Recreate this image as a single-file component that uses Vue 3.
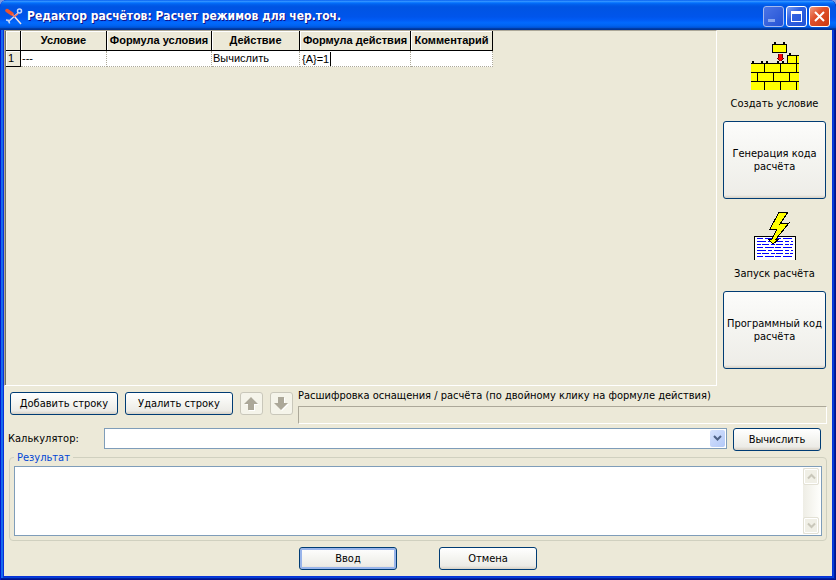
<script setup>
import { ref } from 'vue'

const columns = ['Условие', 'Формула условия', 'Действие', 'Формула действия', 'Комментарий']

const rows = ref([
  { condition: '---', conditionFormula: '', action: 'Вычислить', actionFormula: '{A}=1', comment: '' },
])

const expression = ref('')
const result = ref('')

// [x, y] of the studs and [x, y, height] of the brick joints
const studs = [[23, 0], [32, 0], [38, 11], [1, 19], [10, 19], [15, 19], [26, 19], [31, 19]]
const joints = [[13, 21, 9], [29, 21, 9], [45, 13, 17], [6, 30, 9], [22, 30, 9], [38, 30, 9], [13, 39, 9], [29, 39, 9], [45, 39, 9]]

function addRow() {
  rows.value.push({ condition: '---', conditionFormula: '', action: '', actionFormula: '', comment: '' })
}

function removeRow() {
  rows.value.pop()
}
</script>

<template>
  <div class="window">
    <header class="titlebar">
      <svg class="app-icon" width="18" height="18" viewBox="0 0 18 18" fill="none">
        <path d="M13 6L3 15M1 13l3 .5.500 3" stroke="#c8d8f8" stroke-width="1.500" />
        <circle cx="14.500" cy="4" r="2" stroke="#c8d8f8" stroke-width="1.500" />
        <path d="M9 9l7 8" stroke="#f4e4e4" stroke-width="1.500" />
        <path d="M2 3.500l5 3.500" stroke="#f0532c" stroke-width="3.500" stroke-linecap="round" />
        <path d="M7 7l3 3M10 9l3-2" stroke="#f0735c" stroke-width="1.500" />
      </svg>
      <h1>Редактор расчётов: Расчет режимов для чер.точ.</h1>
      <div class="caption-buttons">
        <button class="caption minimize" aria-label="Свернуть" disabled>
          <svg width="19" height="19" viewBox="0 0 19 19"><path d="M4 12h7v3H4z" fill="#8aa7ee" /></svg>
        </button>
        <button class="caption" aria-label="Развернуть">
          <svg width="19" height="19" viewBox="0 0 19 19"><path d="M4 4h11v11H4zM5 7v7h9V7z" fill="#fff" fill-rule="evenodd" /></svg>
        </button>
        <button class="caption close" aria-label="Закрыть">
          <svg width="19" height="19" viewBox="0 0 19 19"><path d="M5 5l9 9M14 5l-9 9" stroke="#fff" stroke-width="2" /></svg>
        </button>
      </div>
    </header>

    <main class="client">
      <section class="workspace">
        <div class="grid">
          <table>
            <colgroup>
              <col class="c-num" /><col class="c-cond" /><col class="c-condf" />
              <col class="c-act" /><col class="c-actf" /><col class="c-com" />
            </colgroup>
            <thead>
              <tr>
                <th></th>
                <th v-for="column in columns" :key="column">{{ column }}</th>
              </tr>
            </thead>
            <tbody>
              <tr v-for="(row, i) in rows" :key="i">
                <th scope="row">{{ i + 1 }}</th>
                <td>{{ row.condition }}</td>
                <td>{{ row.conditionFormula }}</td>
                <td>{{ row.action }}</td>
                <td><input v-model="row.actionFormula" aria-label="Формула действия" /></td>
                <td>{{ row.comment }}</td>
              </tr>
            </tbody>
          </table>
        </div>

        <aside class="sidebar">
          <button class="picture">
            <svg width="48" height="48" viewBox="0 0 48 48" shape-rendering="crispEdges">
              <path d="M0 21h36v-8h12v35H0zM21 2h15v9H21z" fill="#ff0" />
              <path d="M0 21h48v1H0zM0 30h48v1H0zM0 39h48v1H0zM36 13h12v1H36zM36 13h1v9h-1z" />
              <path d="M21.500 2.500h14v8h-14z" fill="none" stroke="#000" />
              <rect v-for="[x, y] in studs" :key="`s${x}-${y}`" :x="x" :y="y" width="2" height="2" />
              <rect v-for="[x, y, h] in joints" :key="`j${x}-${y}`" :x="x" :y="y" width="1" :height="h" />
              <path d="M28 12h3v4h1v1h-1v1h-1v1h-1v-1h-1v-1h-1v-1h1z" fill="#f00" />
              <path d="M27 12h1v4h-1zM31 12h1v4h-1zM26 16h1v1h-1zM32 16h1v1h-1zM27 17h1v1h-1zM31 17h1v1h-1zM28 18h1v1h-1zM30 18h1v1h-1z" fill="#600" />
            </svg>
            <span>Создать условие</span>
          </button>
          <button class="push tall">Генерация кода расчёта</button>
          <button class="picture">
            <svg width="42" height="48" viewBox="0 0 42 48" shape-rendering="crispEdges">
              <path d="M1 25h40v23H1z" fill="#fff" />
              <path d="M0 48V24h42v24h-1V25H1v23z" />
              <g fill="none" stroke="#00f">
                <path d="M3 26.500h36M3 35.500h36M3 44.500h36" stroke-dasharray="6 2 9 1" />
                <path d="M3 29.500h36M3 38.500h36" stroke-dasharray="9 2 4 2" />
                <path d="M3 32.500h36M3 41.500h36" stroke-dasharray="4 1 7 2" />
              </g>
              <path d="M25 0h9L26 12l9-1L22 27h3l-6 5-5-5h4l5-10h-7z" fill="#ff0" stroke="#000" />
            </svg>
            <span>Запуск расчёта</span>
          </button>
          <button class="push tall">Программный код расчёта</button>
        </aside>
      </section>

      <section class="row-tools">
        <button class="push row-button" @click="addRow">Добавить строку</button>
        <button class="push row-button" @click="removeRow">Удалить строку</button>
        <button class="arrow" aria-label="Вверх" disabled>
          <svg width="15" height="14" viewBox="0 0 15 14">
            <path d="M8 1l7 7h-4v6H5V8H1z" fill="#fff" />
            <path d="M7 0l7 7h-4v6H4V7H0z" fill="#aca899" />
          </svg>
        </button>
        <button class="arrow" aria-label="Вниз" disabled>
          <svg width="15" height="14" viewBox="0 0 15 14">
            <path d="M8 14l7-7h-4V1H5v6H1z" fill="#fff" />
            <path d="M7 13l7-7h-4V0H4v6H0z" fill="#aca899" />
          </svg>
        </button>
        <div class="decode">
          <label for="decode">Расшифровка оснащения / расчёта (по двойному клику на формуле действия)</label>
          <input id="decode" type="text" readonly />
        </div>
      </section>

      <section class="calculator">
        <label for="calc">Калькулятор:</label>
        <div class="combo">
          <select id="calc" v-model="expression">
            <option value=""></option>
          </select>
          <span class="drop">
            <svg width="9" height="7" viewBox="0 0 9 7"><path d="M1 1l3.500 3.500L8 1" fill="none" stroke="#4d6185" stroke-width="2" /></svg>
          </span>
        </div>
        <button class="push calc-button">Вычислить</button>
      </section>

      <fieldset>
        <legend>Результат</legend>
        <div class="memo">
          <textarea v-model="result" aria-label="Результат"></textarea>
          <div class="scrollbar">
            <button aria-label="Прокрутить вверх" disabled>
              <svg width="9" height="7" viewBox="0 0 9 7"><path d="M1 5.500L4.500 2L8 5.500" fill="none" stroke="#c9c7ba" stroke-width="2" /></svg>
            </button>
            <button aria-label="Прокрутить вниз" disabled>
              <svg width="9" height="7" viewBox="0 0 9 7"><path d="M1 1.500L4.500 5L8 1.500" fill="none" stroke="#c9c7ba" stroke-width="2" /></svg>
            </button>
          </div>
        </div>
      </fieldset>

      <footer>
        <button class="push default">Ввод</button>
        <button class="push">Отмена</button>
      </footer>
    </main>
  </div>
</template>

<style>
body {
  margin: 0;
  background: #7b9ae0;
}
</style>

<style scoped>
* {
  box-sizing: border-box;
}

.window {
  display: flex;
  flex-direction: column;
  min-height: 100vh;
  padding: 0 4px 4px;
  border-radius: 7px 7px 0 0;
  background: #0831d9;
  box-shadow: inset 1px 0 #0019cf, inset -1px -1px #00138c, inset -2px -2px #001ea0, inset 3px 0 #166aee, inset -3px -3px #0441d8;
  color: #000;
  font-family: "DejaVu Sans Condensed", "DejaVu Sans", sans-serif;
  font-size: 11px;
  line-height: 13px;
}

button,
input,
select,
textarea {
  margin: 0;
  padding: 0;
  border: 0;
  color: inherit;
  font: inherit;
}

.titlebar {
  display: flex;
  align-items: center;
  height: 30px;
  margin: 0 -4px;
  padding: 2px 6px 0 5px;
  border-radius: 7px 7px 0 0;
  background: linear-gradient(#0058ee 0, #3593ff 4%, #288eff 6%, #127dff 8%, #036ffc 10%, #0262ee 14%, #0057e5 20%, #0054e3 24%, #0055eb 56%, #005bf5 66%, #026afe 76%, #0062ef 86%, #0052d6 92%, #0040ab 94%, #003092 100%);
}

h1 {
  flex: 1;
  margin: 0 0 0 4px;
  color: #fff;
  font-size: 12px;
  line-height: 16px;
  text-shadow: 1px 1px #0f1089;
  white-space: nowrap;
}

.caption-buttons {
  display: flex;
  gap: 2px;
}

.caption {
  width: 21px;
  height: 21px;
  border: 1px solid #fff;
  border-radius: 3px;
  background: linear-gradient(135deg, #7d9ff2, #2f60e0 40%, #2254d6);
}

.caption svg {
  display: block;
}

.caption.minimize {
  border-color: #a3b9ee;
  background: linear-gradient(135deg, #4a74e6, #2452d4);
}

.caption.close {
  background: linear-gradient(135deg, #f09a80, #e0512c 40%, #cc3a10);
}

.client {
  display: flex;
  flex: 1;
  flex-direction: column;
  background: #ece9d8;
}

.workspace {
  display: flex;
  flex: 1;
}

.grid {
  flex: 1;
  border: 1px solid;
  border-color: #aca899 #fff #fff #aca899;
  box-shadow: inset 1px 0 #716f64;
  padding-left: 1px;
}

table {
  border-collapse: separate;
  border-spacing: 0;
  table-layout: fixed;
  width: 487px;
  font-family: "Liberation Sans", Arial, sans-serif;
}

.c-num {
  width: 15px;
}

.c-cond {
  width: 86px;
}

.c-condf {
  width: 105px;
}

.c-act {
  width: 88px;
}

.c-actf {
  width: 111px;
}

.c-com {
  width: 82px;
}

th,
td {
  padding: 0 1px;
  white-space: nowrap;
}

th {
  height: 20px;
  border: solid #000;
  border-width: 0 1px 1px 0;
  box-shadow: inset 1px 1px #fff;
}

tbody th {
  height: 16px;
  padding-left: 2px;
  font-weight: 400;
  text-align: left;
}

td {
  border: dotted #aca899;
  border-width: 0 1px 1px 0;
  background: #fff;
  text-align: left;
}

td input {
  display: block;
  width: 30px;
  height: 14px;
  padding-left: 1px;
  border-right: 1px solid #000;
  outline: 0;
}

.sidebar {
  display: flex;
  flex-direction: column;
  width: 115px;
  padding: 12px 6px 0;
}

.picture {
  display: flex;
  flex-direction: column;
  align-items: center;
  justify-content: space-between;
  height: 68px;
  background: none;
  white-space: nowrap;
}

.push {
  width: 98px;
  height: 23px;
  border: 1px solid #003c74;
  border-radius: 3px;
  background: linear-gradient(#fff, #f4f4f0 50%, #ecebe6 85%, #d6d0c5);
}

.push.tall {
  width: 103px;
  height: 78px;
  margin: 11px 0 13px;
  background: linear-gradient(#fcfcfb, #f4f4f0 50%, #eeede8 96%, #d6d0c5);
}

.push.default {
  box-shadow: inset 0 0 0 2px #98b4ea;
}

.row-tools {
  display: flex;
  align-items: flex-start;
  padding: 6px 5px 0 6px;
}

.push.row-button {
  width: 108px;
  margin-right: 7px;
}

.arrow {
  display: flex;
  align-items: center;
  justify-content: center;
  width: 23px;
  height: 23px;
  margin-right: 7px;
  border: 1px solid #c9c7ba;
  border-radius: 3px;
  background: #f5f4ea;
}

.decode {
  flex: 1;
  margin: -3px 0 0 -2px;
}

.decode label,
.decode input {
  display: block;
}

.decode input {
  width: 100%;
  height: 18px;
  margin-top: 4px;
  border: 1px solid;
  border-color: #aca899 #fff #fff #aca899;
  background: #ece9d8;
}

.calculator {
  display: flex;
  align-items: flex-start;
  padding: 4px 11px 0 4px;
}

.calculator label {
  width: 96px;
  line-height: 21px;
}

.combo {
  position: relative;
  flex: 1;
  height: 21px;
  margin-right: 6px;
}

.combo select {
  display: block;
  width: 100%;
  height: 21px;
  border: 1px solid #7f9db9;
  border-radius: 0;
  background: #fff;
  appearance: none;
}

.drop {
  position: absolute;
  top: 2px;
  right: 2px;
  display: flex;
  align-items: center;
  justify-content: center;
  width: 15px;
  height: 17px;
  border-radius: 2px;
  background: linear-gradient(135deg, #d6e2fd, #b3c9f8);
  pointer-events: none;
}

.push.calc-button {
  width: 88px;
}

fieldset {
  min-width: 0;
  margin: 0 5px;
  padding: 2px 4px 4px;
  border: 1px solid #d0d0bf;
  border-radius: 4px;
}

legend {
  padding: 0 3px;
  color: #0046d5;
}

.memo {
  display: flex;
  height: 70px;
  padding: 1px;
  border: 1px solid #7f9db9;
  background: #fff;
}

textarea {
  flex: 1;
  outline: 0;
  resize: none;
}

.scrollbar {
  display: flex;
  flex-direction: column;
  justify-content: space-between;
  width: 17px;
  background: linear-gradient(90deg, #eeede5, #fefefb);
}

.scrollbar button {
  display: flex;
  align-items: center;
  justify-content: center;
  width: 16px;
  height: 17px;
  border: 1px solid #e3e1d5;
  border-radius: 2px;
  background: #f0efe6;
  box-shadow: inset 0 0 0 1px #fff;
}

footer {
  display: flex;
  justify-content: center;
  gap: 42px;
  padding: 6px 0;
}
</style>
